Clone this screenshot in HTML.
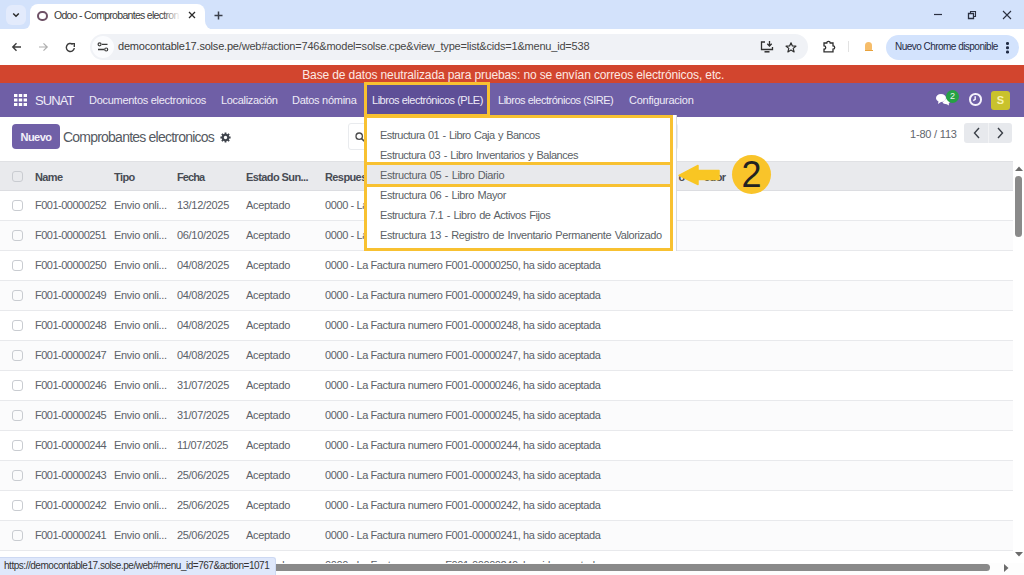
<!DOCTYPE html>
<html><head><meta charset="utf-8">
<style>
*{margin:0;padding:0;box-sizing:border-box}
html,body{width:1024px;height:575px;overflow:hidden;background:#fff;font-family:"Liberation Sans",sans-serif;position:relative}
#root{position:absolute;left:0;top:0;width:1024px;height:575px;overflow:hidden;background:#fff}
.a{position:absolute;white-space:nowrap}
#tabs{left:0;top:0;width:1024px;height:29px;background:#d3e2fb}
#addr{left:0;top:29px;width:1024px;height:36px;background:#fff}
#banner{left:0;top:65px;width:1024px;height:18px;background:#d2452e;color:#fde9e3;padding-top:1px;font-size:12px;text-align:center;line-height:18px;letter-spacing:-0.12px;text-indent:2.4px}
#nav{left:0;top:83px;width:1024px;height:34px;background:#6f5fa6}
.nv{color:#eeebf7;font-size:11px;top:94px;letter-spacing:-0.28px}
#cp{left:0;top:117px;width:1024px;height:44px;background:#fff}
#thead{left:0;top:161px;width:1013px;height:30px;background:#e9eaed;border-top:1px solid #e0e1e4;border-bottom:1px solid #dcdde1}
.th{font-weight:bold;color:#484c54;font-size:11px;letter-spacing:-0.6px;top:171px}
.row{left:0;width:1013px;height:30px;border-bottom:1px solid #e8e9ec;background:#fff}
.td{color:#5c6168;font-size:11px;letter-spacing:-0.31px}
.cb{width:11px;height:11px;border:1px solid #c9ccd1;border-radius:3px;left:12px}
.dd{left:380px;color:#5b5f66;font-size:11px;letter-spacing:-0.39px;word-spacing:0.9px}
.yb{border:3px solid #f8c131}
</style></head><body><div id="root">
<!-- tab strip -->
<div class="a" id="tabs"></div>
<div class="a" style="left:30px;top:4px;width:175px;height:26px;background:#fff;border-radius:8px 8px 0 0"></div>
<div class="a" style="left:195px;top:19px;width:20px;height:11px;background:#fff"></div>
<div class="a" style="left:205px;top:9px;width:20px;height:21px;background:#d3e2fb;border-radius:0 0 0 9px"></div>
<div class="a" style="left:24px;top:22px;width:6px;height:7px;background:#fff"></div>
<div class="a" style="left:14px;top:9px;width:16px;height:20px;background:#d3e2fb;border-radius:0 0 6px 0"></div>
<div class="a" style="left:6px;top:5px;width:20px;height:20px;border-radius:6px;background:#e3ebfc"></div>
<svg class="a" style="left:12px;top:12px" width="8" height="6" viewBox="0 0 8 6"><path d="M1.2 1.5L4 4.3L6.8 1.5" stroke="#2a2a2a" stroke-width="1.5" fill="none"/></svg>
<div class="a" style="left:37px;top:10.5px;width:10.5px;height:10.5px;border:2.2px solid #6e5166;border-radius:50%"></div>
<div class="a" style="left:54px;top:9px;font-size:10.5px;color:#3a3a3a;letter-spacing:-0.7px">Odoo - Comprobantes electron</div>
<div class="a" style="left:162px;top:6px;width:22px;height:20px;background:linear-gradient(90deg,rgba(255,255,255,0),#fff 85%)"></div>
<svg class="a" style="left:188px;top:11px" width="8" height="8" viewBox="0 0 8 8"><path d="M1 1L7 7M7 1L1 7" stroke="#2a2a2a" stroke-width="1.3"/></svg>
<svg class="a" style="left:214px;top:11px" width="9" height="9" viewBox="0 0 9 9"><path d="M4.5 0.5V8.5M0.5 4.5H8.5" stroke="#3a3f4a" stroke-width="1.5"/></svg>
<svg class="a" style="left:933px;top:10px" width="10" height="10" viewBox="0 0 10 10"><path d="M1 4.5H9" stroke="#2a3040" stroke-width="1.2"/></svg>
<svg class="a" style="left:967px;top:10px" width="10" height="10" viewBox="0 0 10 10"><path d="M1.5 3.5H6.5V8.5H1.5Z" stroke="#2a3040" stroke-width="1.3" fill="none"/><path d="M3.5 3.5V1.5H8.5V6.5H6.5" stroke="#2a3040" stroke-width="1.1" fill="none"/></svg>
<svg class="a" style="left:1002px;top:10px" width="10" height="10" viewBox="0 0 10 10"><path d="M1 1L9 9M9 1L1 9" stroke="#2a3040" stroke-width="1.1"/></svg>

<!-- address row -->
<div class="a" id="addr"></div>
<svg class="a" style="left:11px;top:42px" width="11" height="10" viewBox="0 0 11 10"><path d="M10 5H2M5.5 1.3L1.8 5L5.5 8.7" stroke="#3c3c3c" stroke-width="1.4" fill="none"/></svg>
<svg class="a" style="left:38px;top:42px" width="11" height="10" viewBox="0 0 11 10"><path d="M1 5H9M5.5 1.3L9.2 5L5.5 8.7" stroke="#aeaeae" stroke-width="1.2" fill="none"/></svg>
<svg class="a" style="left:65px;top:42px" width="11" height="11" viewBox="0 0 11 11"><path d="M9.3 6A4 4 0 1 1 7.8 2.3" stroke="#3c3c3c" stroke-width="1.4" fill="none"/><path d="M6 1.6H9.3V4.9" stroke="#3c3c3c" stroke-width="1.4" fill="none"/></svg>
<div class="a" style="left:90px;top:34px;width:718px;height:26px;border-radius:13px;background:#f0f2f6"></div>
<div class="a" style="left:92px;top:36px;width:22px;height:22px;border-radius:50%;background:#fbfcfe"></div>
<svg class="a" style="left:97px;top:42px" width="12" height="10" viewBox="0 0 12 10"><circle cx="2.6" cy="2.3" r="1.5" stroke="#3a3a3a" stroke-width="1.2" fill="none"/><path d="M5 2.3H10.5M1 7.5H7" stroke="#3a3a3a" stroke-width="1.3"/><circle cx="9.2" cy="7.5" r="1.5" stroke="#3a3a3a" stroke-width="1.2" fill="none"/></svg>
<div class="a" style="left:118px;top:40px;font-size:11px;color:#3c3c3c;letter-spacing:-0.2px">democontable17.solse.pe<span style="color:#474747">/web#action=746&amp;model=solse.cpe&amp;view_type=list&amp;cids=1&amp;menu_id=538</span></div>
<svg class="a" style="left:760px;top:40px" width="14" height="13" viewBox="0 0 14 13"><path d="M5 2H1.5V9.5H12.5V7" stroke="#2f2f2f" stroke-width="1.3" fill="none"/><path d="M4.5 11.8H9.5" stroke="#2f2f2f" stroke-width="1.5"/><path d="M9.5 1V6M7.3 3.8L9.5 6L11.7 3.8" stroke="#2f2f2f" stroke-width="1.3" fill="none"/></svg>
<svg class="a" style="left:785px;top:42px" width="12" height="11" viewBox="0 0 12 11"><path d="M6 0.8L7.4 4L10.9 4.2L8.2 6.4L9.1 9.9L6 8L2.9 9.9L3.8 6.4L1.1 4.2L4.6 4Z" stroke="#2f2f2f" stroke-width="1.2" fill="none" stroke-linejoin="round"/></svg>
<svg class="a" style="left:822px;top:40px" width="14" height="13" viewBox="0 0 14 13"><path d="M2 3H4.8A1.7 1.7 0 0 1 8.2 3H11V5.8A1.7 1.7 0 0 1 11 9.2V11.8H2V9.2A1.4 1.4 0 0 0 2 5.8Z" stroke="#2f2f2f" stroke-width="1.3" fill="none"/></svg>
<div class="a" style="left:848px;top:41px;width:1px;height:11px;background:#e2e2e2"></div>
<div class="a" style="left:865px;top:42px;width:7px;height:7.5px;border-radius:4px 4px 1px 1px;background:#f6bd6a"></div>
<div class="a" style="left:864.5px;top:50px;width:8px;height:1.4px;background:#e8a23c"></div>
<div class="a" style="left:886px;top:35px;width:133px;height:25px;border-radius:13px;background:#d3e3fd"></div>
<div class="a" style="left:895px;top:41px;font-size:10px;color:#1f2a44;letter-spacing:-0.53px">Nuevo Chrome disponible</div>
<div class="a" style="left:1006px;top:42px;width:2.6px;height:2.6px;border-radius:50%;background:#1f2a44;box-shadow:0 4.3px 0 #1f2a44,0 8.6px 0 #1f2a44"></div>

<!-- banner -->
<div class="a" id="banner">Base de datos neutralizada para pruebas: no se envían correos electrónicos, etc.</div>

<!-- nav -->
<div class="a" id="nav"></div>
<svg class="a" style="left:14px;top:94px" width="13" height="12" viewBox="0 0 13 12"><g fill="#fff"><rect x="0" y="0" width="3.4" height="3"/><rect x="4.8" y="0" width="3.4" height="3"/><rect x="9.6" y="0" width="3.4" height="3"/><rect x="0" y="4.5" width="3.4" height="3"/><rect x="4.8" y="4.5" width="3.4" height="3"/><rect x="9.6" y="4.5" width="3.4" height="3"/><rect x="0" y="9" width="3.4" height="3"/><rect x="4.8" y="9" width="3.4" height="3"/><rect x="9.6" y="9" width="3.4" height="3"/></g></svg>
<div class="a nv" style="left:35px;top:93px;font-size:13px;letter-spacing:-0.9px">SUNAT</div>
<div class="a nv" style="left:89px">Documentos electronicos</div>
<div class="a nv" style="left:221px;letter-spacing:-0.33px">Localización</div>
<div class="a nv" style="left:292px">Datos nómina</div>
<div class="a yb" style="left:364px;top:82px;width:126px;height:35px;background:#5e4f97"></div>
<div class="a nv" style="left:372px;letter-spacing:-0.48px">Libros electrónicos (PLE)</div>
<div class="a nv" style="left:498px;letter-spacing:-0.48px">Libros electrónicos (SIRE)</div>
<div class="a nv" style="left:629px;letter-spacing:-0.26px">Configuracion</div>
<svg class="a" style="left:935px;top:93px" width="16" height="14" viewBox="0 0 16 14"><path d="M6 1C9 1 11 2.8 11 5C11 7.2 9 9 6 9L3 11L3.5 8.5C2 7.6 1 6.4 1 5C1 2.8 3 1 6 1Z" fill="#fff"/><path d="M12 5C14 5.5 15 6.8 15 8.2C15 9.2 14.5 10 13.7 10.6L14 12.5L11.8 11.2C9.8 11.2 8.2 10.5 7.5 9.5" fill="#fff"/></svg>
<div class="a" style="left:946px;top:90px;width:13px;height:13px;border-radius:50%;background:#25a244;color:#e8f5e8;font-size:9px;text-align:center;line-height:13px">2</div>
<div class="a" style="left:969px;top:93px;width:12.5px;height:12.5px;border:2px solid #f4f1fb;border-radius:50%"></div>
<svg class="a" style="left:969px;top:93px" width="12" height="12" viewBox="0 0 12 12"><path d="M6.2 3.2V6.3L4.2 7.6" stroke="#f4f1fb" stroke-width="1.5" fill="none"/></svg>
<div class="a" style="left:991px;top:91px;width:19px;height:19px;border-radius:3px;background:#c9c22c;color:#f7f2b0;font-size:11px;text-align:center;line-height:19px;font-weight:bold">S</div>

<!-- control panel -->
<div class="a" style="left:12px;top:124px;width:48px;height:25px;border-radius:4px;background:#7060a7;color:#f3f0fa;font-size:11px;font-weight:bold;text-align:center;line-height:26px;letter-spacing:-0.5px">Nuevo</div>
<div class="a" style="left:63px;top:129px;font-size:14px;color:#555a62;letter-spacing:-0.78px">Comprobantes electronicos</div>
<svg class="a" style="left:220px;top:132px" width="11" height="11" viewBox="0 0 11 11"><path fill-rule="evenodd" fill="#3f444c" d="M9.29 4.58L10.62 4.61L10.62 6.39L9.29 6.42L8.83 7.53L9.75 8.49L8.49 9.75L7.53 8.83L6.42 9.29L6.39 10.62L4.61 10.62L4.58 9.29L3.47 8.83L2.51 9.75L1.25 8.49L2.17 7.53L1.71 6.42L0.38 6.39L0.38 4.61L1.71 4.58L2.17 3.47L1.25 2.51L2.51 1.25L3.47 2.17L4.58 1.71L4.61 0.38L6.39 0.38L6.42 1.71L7.53 2.17L8.49 1.25L9.75 2.51L8.83 3.47Z M5.5 3.8A1.7 1.7 0 1 0 5.5 7.2A1.7 1.7 0 1 0 5.5 3.8Z"/></svg>
<div class="a" style="left:348px;top:123px;width:330px;height:27px;border:1px solid #e9ebee;border-radius:3px;background:#fff"></div>
<svg class="a" style="left:355px;top:132px" width="10" height="10" viewBox="0 0 10 10"><circle cx="4.2" cy="4.2" r="3.2" stroke="#4a4a4a" stroke-width="1.3" fill="none"/><path d="M6.6 6.6L9.3 9.3" stroke="#4a4a4a" stroke-width="1.5"/></svg>
<div class="a" style="left:910px;top:128px;font-size:11px;color:#62666d;letter-spacing:-0.2px">1-80 / 113</div>
<div class="a" style="left:964px;top:123px;width:48px;height:20px;border-radius:3px;background:#e7e9ed"></div>
<div class="a" style="left:988px;top:123px;width:1px;height:20px;background:#f2f3f5"></div>
<svg class="a" style="left:972px;top:127px" width="10" height="12" viewBox="0 0 10 12"><path d="M7 1L2.5 6L7 11" stroke="#3a3f47" stroke-width="1.4" fill="none"/></svg>
<svg class="a" style="left:995px;top:127px" width="10" height="12" viewBox="0 0 10 12"><path d="M3 1L7.5 6L3 11" stroke="#3a3f47" stroke-width="1.4" fill="none"/></svg>

<!-- table -->
<div class="a" id="thead"></div>
<div class="a cb" style="top:171px"></div>
<div class="a th" style="left:35px">Name</div>
<div class="a th" style="left:114px">Tipo</div>
<div class="a th" style="left:177px;letter-spacing:-0.9px">Fecha</div>
<div class="a th" style="left:246px">Estado Sun...</div>
<div class="a th" style="left:325px">Respuesta</div>
<div id="rows">
<div class="a row" style="top:191px"></div>
<div class="a cb" style="top:200px"></div>
<div class="a td" style="left:35px;top:199px;letter-spacing:-0.5px">F001-00000252</div>
<div class="a td" style="left:114px;top:199px">Envio onli...</div>
<div class="a td" style="left:177px;top:199px">13/12/2025</div>
<div class="a td" style="left:246px;top:199px">Aceptado</div>
<div class="a td" style="left:325px;top:199px;letter-spacing:-0.4px">0000 - La Factura numero F001-00000252, ha sido aceptada</div>
<div class="a row" style="top:221px;background:#fbfbfc"></div>
<div class="a cb" style="top:230px"></div>
<div class="a td" style="left:35px;top:229px;letter-spacing:-0.5px">F001-00000251</div>
<div class="a td" style="left:114px;top:229px">Envio onli...</div>
<div class="a td" style="left:177px;top:229px">06/10/2025</div>
<div class="a td" style="left:246px;top:229px">Aceptado</div>
<div class="a td" style="left:325px;top:229px;letter-spacing:-0.4px">0000 - La Factura numero F001-00000251, ha sido aceptada</div>
<div class="a row" style="top:251px"></div>
<div class="a cb" style="top:260px"></div>
<div class="a td" style="left:35px;top:259px;letter-spacing:-0.5px">F001-00000250</div>
<div class="a td" style="left:114px;top:259px">Envio onli...</div>
<div class="a td" style="left:177px;top:259px">04/08/2025</div>
<div class="a td" style="left:246px;top:259px">Aceptado</div>
<div class="a td" style="left:325px;top:259px;letter-spacing:-0.4px">0000 - La Factura numero F001-00000250, ha sido aceptada</div>
<div class="a row" style="top:281px;background:#fbfbfc"></div>
<div class="a cb" style="top:290px"></div>
<div class="a td" style="left:35px;top:289px;letter-spacing:-0.5px">F001-00000249</div>
<div class="a td" style="left:114px;top:289px">Envio onli...</div>
<div class="a td" style="left:177px;top:289px">04/08/2025</div>
<div class="a td" style="left:246px;top:289px">Aceptado</div>
<div class="a td" style="left:325px;top:289px;letter-spacing:-0.4px">0000 - La Factura numero F001-00000249, ha sido aceptada</div>
<div class="a row" style="top:311px"></div>
<div class="a cb" style="top:320px"></div>
<div class="a td" style="left:35px;top:319px;letter-spacing:-0.5px">F001-00000248</div>
<div class="a td" style="left:114px;top:319px">Envio onli...</div>
<div class="a td" style="left:177px;top:319px">04/08/2025</div>
<div class="a td" style="left:246px;top:319px">Aceptado</div>
<div class="a td" style="left:325px;top:319px;letter-spacing:-0.4px">0000 - La Factura numero F001-00000248, ha sido aceptada</div>
<div class="a row" style="top:341px;background:#fbfbfc"></div>
<div class="a cb" style="top:350px"></div>
<div class="a td" style="left:35px;top:349px;letter-spacing:-0.5px">F001-00000247</div>
<div class="a td" style="left:114px;top:349px">Envio onli...</div>
<div class="a td" style="left:177px;top:349px">04/08/2025</div>
<div class="a td" style="left:246px;top:349px">Aceptado</div>
<div class="a td" style="left:325px;top:349px;letter-spacing:-0.4px">0000 - La Factura numero F001-00000247, ha sido aceptada</div>
<div class="a row" style="top:371px"></div>
<div class="a cb" style="top:380px"></div>
<div class="a td" style="left:35px;top:379px;letter-spacing:-0.5px">F001-00000246</div>
<div class="a td" style="left:114px;top:379px">Envio onli...</div>
<div class="a td" style="left:177px;top:379px">31/07/2025</div>
<div class="a td" style="left:246px;top:379px">Aceptado</div>
<div class="a td" style="left:325px;top:379px;letter-spacing:-0.4px">0000 - La Factura numero F001-00000246, ha sido aceptada</div>
<div class="a row" style="top:401px;background:#fbfbfc"></div>
<div class="a cb" style="top:410px"></div>
<div class="a td" style="left:35px;top:409px;letter-spacing:-0.5px">F001-00000245</div>
<div class="a td" style="left:114px;top:409px">Envio onli...</div>
<div class="a td" style="left:177px;top:409px">31/07/2025</div>
<div class="a td" style="left:246px;top:409px">Aceptado</div>
<div class="a td" style="left:325px;top:409px;letter-spacing:-0.4px">0000 - La Factura numero F001-00000245, ha sido aceptada</div>
<div class="a row" style="top:431px"></div>
<div class="a cb" style="top:440px"></div>
<div class="a td" style="left:35px;top:439px;letter-spacing:-0.5px">F001-00000244</div>
<div class="a td" style="left:114px;top:439px">Envio onli...</div>
<div class="a td" style="left:177px;top:439px">11/07/2025</div>
<div class="a td" style="left:246px;top:439px">Aceptado</div>
<div class="a td" style="left:325px;top:439px;letter-spacing:-0.4px">0000 - La Factura numero F001-00000244, ha sido aceptada</div>
<div class="a row" style="top:461px;background:#fbfbfc"></div>
<div class="a cb" style="top:470px"></div>
<div class="a td" style="left:35px;top:469px;letter-spacing:-0.5px">F001-00000243</div>
<div class="a td" style="left:114px;top:469px">Envio onli...</div>
<div class="a td" style="left:177px;top:469px">25/06/2025</div>
<div class="a td" style="left:246px;top:469px">Aceptado</div>
<div class="a td" style="left:325px;top:469px;letter-spacing:-0.4px">0000 - La Factura numero F001-00000243, ha sido aceptada</div>
<div class="a row" style="top:491px"></div>
<div class="a cb" style="top:500px"></div>
<div class="a td" style="left:35px;top:499px;letter-spacing:-0.5px">F001-00000242</div>
<div class="a td" style="left:114px;top:499px">Envio onli...</div>
<div class="a td" style="left:177px;top:499px">25/06/2025</div>
<div class="a td" style="left:246px;top:499px">Aceptado</div>
<div class="a td" style="left:325px;top:499px;letter-spacing:-0.4px">0000 - La Factura numero F001-00000242, ha sido aceptada</div>
<div class="a row" style="top:521px;background:#fbfbfc"></div>
<div class="a cb" style="top:530px"></div>
<div class="a td" style="left:35px;top:529px;letter-spacing:-0.5px">F001-00000241</div>
<div class="a td" style="left:114px;top:529px">Envio onli...</div>
<div class="a td" style="left:177px;top:529px">25/06/2025</div>
<div class="a td" style="left:246px;top:529px">Aceptado</div>
<div class="a td" style="left:325px;top:529px;letter-spacing:-0.4px">0000 - La Factura numero F001-00000241, ha sido aceptada</div>
<div class="a row" style="top:551px"></div>
<div class="a cb" style="top:560px"></div>
<div class="a td" style="left:35px;top:559px;letter-spacing:-0.5px">F001-00000240</div>
<div class="a td" style="left:114px;top:559px">Envio onli...</div>
<div class="a td" style="left:177px;top:559px">25/06/2025</div>
<div class="a td" style="left:246px;top:559px">Aceptado</div>
<div class="a td" style="left:325px;top:559px;letter-spacing:-0.4px">0000 - La Factura numero F001-00000240, ha sido aceptada</div>
</div>
<!--END-ROWS-->
<!-- header col under arrow -->
<div class="a th" style="left:678.5px">o</div><div class="a th" style="left:704px">edor</div>
<!-- dropdown -->
<div class="a" style="left:364px;top:115px;width:313px;height:136px;background:#fff;border-right:1px solid #d8dadd"></div>
<div class="a" style="left:367px;top:165px;width:306px;height:19px;background:#e8e9ec"></div>
<div class="a yb" style="left:364px;top:115px;width:309px;height:50px"></div>
<div class="a yb" style="left:364px;top:162px;width:309px;height:25px"></div>
<div class="a yb" style="left:364px;top:184px;width:309px;height:67px"></div>
<div class="a dd" style="top:129px;letter-spacing:-0.556px">Estructura 01 - Libro Caja y Bancos</div>
<div class="a dd" style="top:149px;letter-spacing:-0.474px">Estructura 03 - Libro Inventarios y Balances</div>
<div class="a dd" style="top:169px;letter-spacing:-0.39px">Estructura 05 - Libro Diario</div>
<div class="a dd" style="top:189px;letter-spacing:-0.4px">Estructura 06 - Libro Mayor</div>
<div class="a dd" style="top:209px;letter-spacing:-0.444px">Estructura 7.1 - Libro de Activos Fijos</div>
<div class="a dd" style="top:229px;letter-spacing:-0.41px">Estructura 13 - Registro de Inventario Permanente Valorizado</div>
<!-- arrow + circle -->
<svg class="a" style="left:676px;top:162px" width="48" height="26" viewBox="0 0 48 26"><path d="M3 13.3L22 3.5V8.5H43V17.5H22V22.5Z" fill="#f9c623" stroke="#f9c623" stroke-width="1.5" stroke-linejoin="round"/></svg>
<div class="a" style="left:732px;top:155px;width:39px;height:39px;border-radius:50%;background:#f9c42a"></div>
<div class="a" style="left:732px;top:154.5px;width:39px;height:39px;text-align:center;font-size:36px;line-height:39px;color:#222">2</div>
<!-- scrollbars -->
<div class="a" style="left:1013px;top:161px;width:11px;height:400px;background:#fff"></div>
<svg class="a" style="left:1015px;top:166px" width="8" height="5" viewBox="0 0 8 5"><path d="M0 5L4 0.5L8 5Z" fill="#6b6b6b"/></svg>
<div class="a" style="left:1015px;top:176px;width:7px;height:61px;border-radius:4px;background:#8a8a8a"></div>
<svg class="a" style="left:1015px;top:552px" width="8" height="5" viewBox="0 0 8 5"><path d="M0 0L4 4.5L8 0Z" fill="#6b6b6b"/></svg>
<div class="a" style="left:0;top:563px;width:1024px;height:12px;background:#fdfdfd"></div>
<div class="a" style="left:0;top:564px;width:990px;height:7px;border-radius:4px;background:#8a8a8a"></div>
<svg class="a" style="left:1004px;top:564px" width="5" height="8" viewBox="0 0 5 8"><path d="M0 0L4.5 4L0 8Z" fill="#6b6b6b"/></svg>
<div class="a" style="left:0;top:557px;width:276px;height:18px;background:#dfe8fb;border-top-right-radius:3px;border:1px solid #cdd9f3;border-left:none;border-bottom:none"></div>
<div class="a" style="left:4px;top:560px;font-size:10px;color:#333;letter-spacing:-0.47px">https://democontable17.solse.pe/web#menu_id=767&amp;action=1071</div>

</div></body></html>
